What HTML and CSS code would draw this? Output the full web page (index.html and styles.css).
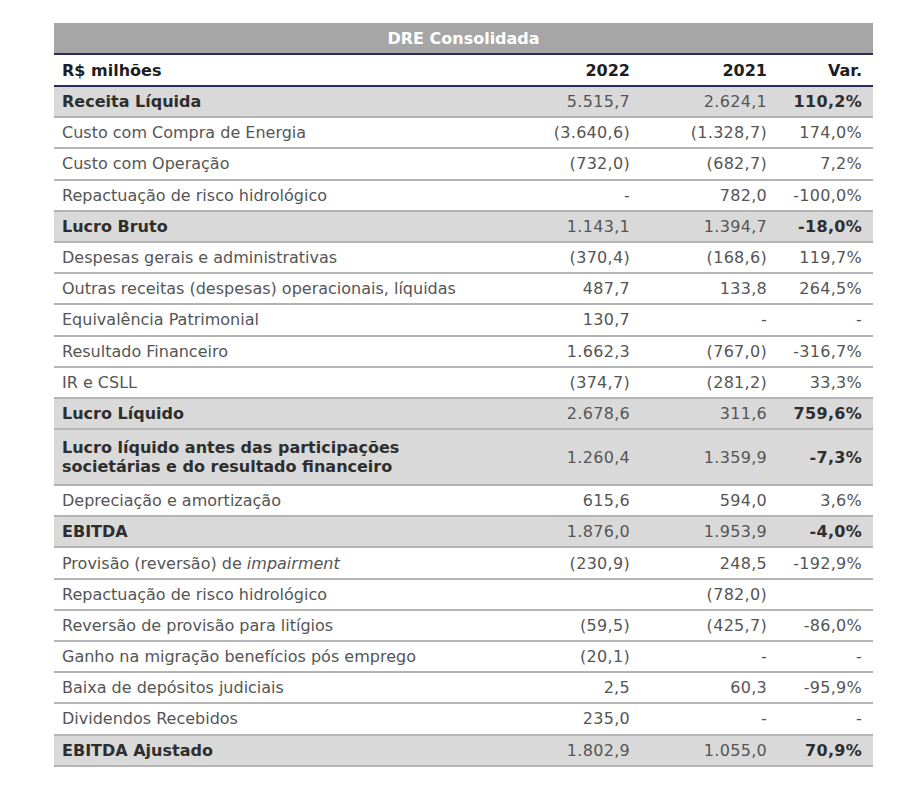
FILE: index.html
```html
<!DOCTYPE html>
<html lang="pt-BR">
<head>
<meta charset="utf-8">
<title>DRE Consolidada</title>
<link rel="stylesheet" href="styles.css">
</head>
<body>
<div class="page">
<table class="dre">
<colgroup><col class="c-label"><col class="c-y1"><col class="c-y2"><col class="c-var"></colgroup>
<thead>
<tr class="title"><th colspan="4">DRE Consolidada</th></tr>
<tr class="heads"><th class="lbl">R$ milhões</th><th>2022</th><th>2021</th><th>Var.</th></tr>
</thead>
<tbody>
<tr class="tot"><td class="lbl">Receita Líquida</td><td>5.515,7</td><td>2.624,1</td><td class="v">110,2%</td></tr>
<tr><td class="lbl">Custo com Compra de Energia</td><td>(3.640,6)</td><td>(1.328,7)</td><td class="v">174,0%</td></tr>
<tr><td class="lbl">Custo com Operação</td><td>(732,0)</td><td>(682,7)</td><td class="v">7,2%</td></tr>
<tr><td class="lbl">Repactuação de risco hidrológico</td><td>-</td><td>782,0</td><td class="v">-100,0%</td></tr>
<tr class="tot"><td class="lbl">Lucro Bruto</td><td>1.143,1</td><td>1.394,7</td><td class="v">-18,0%</td></tr>
<tr><td class="lbl">Despesas gerais e administrativas</td><td>(370,4)</td><td>(168,6)</td><td class="v">119,7%</td></tr>
<tr><td class="lbl">Outras receitas (despesas) operacionais, líquidas</td><td>487,7</td><td>133,8</td><td class="v">264,5%</td></tr>
<tr><td class="lbl">Equivalência Patrimonial</td><td>130,7</td><td>-</td><td class="v">-</td></tr>
<tr><td class="lbl">Resultado Financeiro</td><td>1.662,3</td><td>(767,0)</td><td class="v">-316,7%</td></tr>
<tr><td class="lbl">IR e CSLL</td><td>(374,7)</td><td>(281,2)</td><td class="v">33,3%</td></tr>
<tr class="tot"><td class="lbl">Lucro Líquido</td><td>2.678,6</td><td>311,6</td><td class="v">759,6%</td></tr>
<tr class="tot dbl"><td class="lbl">Lucro líquido antes das participações<br>societárias e do resultado financeiro</td><td>1.260,4</td><td>1.359,9</td><td class="v">-7,3%</td></tr>
<tr><td class="lbl">Depreciação e amortização</td><td>615,6</td><td>594,0</td><td class="v">3,6%</td></tr>
<tr class="tot"><td class="lbl">EBITDA</td><td>1.876,0</td><td>1.953,9</td><td class="v">-4,0%</td></tr>
<tr><td class="lbl">Provisão (reversão) de <em>impairment</em></td><td>(230,9)</td><td>248,5</td><td class="v">-192,9%</td></tr>
<tr><td class="lbl">Repactuação de risco hidrológico</td><td></td><td>(782,0)</td><td class="v"></td></tr>
<tr><td class="lbl">Reversão de provisão para litígios</td><td>(59,5)</td><td>(425,7)</td><td class="v">-86,0%</td></tr>
<tr><td class="lbl">Ganho na migração benefícios pós emprego</td><td>(20,1)</td><td>-</td><td class="v">-</td></tr>
<tr><td class="lbl">Baixa de depósitos judiciais</td><td>2,5</td><td>60,3</td><td class="v">-95,9%</td></tr>
<tr><td class="lbl">Dividendos Recebidos</td><td>235,0</td><td>-</td><td class="v">-</td></tr>
<tr class="tot"><td class="lbl">EBITDA Ajustado</td><td>1.802,9</td><td>1.055,0</td><td class="v">70,9%</td></tr>
</tbody>
</table>
</div>
</body>
</html>
```

FILE: styles.css
```css
html, body {
  margin: 0;
  padding: 0;
  background: #ffffff;
}
.page {
  padding: 23px 0 0 54px;
}
.dre {
  width: 819px;
  border-collapse: collapse;
  table-layout: fixed;
  font-family: "DejaVu Sans", Verdana, sans-serif;
  font-size: 16px;
  color: #555555;
}
.c-label { width: 446px; }
.c-y1 { width: 141px; }
.c-y2 { width: 137px; }
.c-var { width: 95px; }
.dre th, .dre td {
  padding: 0 11px 0 8px;
  text-align: right;
  white-space: nowrap;
  overflow: visible;
}
.dre .lbl { text-align: left; }
.dre tbody td:not(.lbl) {
  letter-spacing: 0.3px;
}
.title th {
  background: #a6a6a6;
  color: #ffffff;
  font-weight: bold;
  text-align: center;
  height: 30px;
  padding: 0;
  border-bottom: 2px solid #2b2b5e;
}
.heads th {
  height: 30px;
  color: #1e1e1e;
  font-weight: bold;
  border-bottom: 2px solid #2b2b5e;
}
.dre tbody td {
  height: 29.2px;
  border-bottom: 2px solid #b4b4b4;
}
.dre tbody tr.tot td {
  background: #d9d9d9;
}
.dre tbody tr.tot td.lbl,
.dre tbody tr.tot td.v {
  font-weight: bold;
  color: #2e2e2e;
}
.dre tbody tr.dbl td {
  height: 54px;
  line-height: 19px;
}
.dre em { font-style: italic; }
```
